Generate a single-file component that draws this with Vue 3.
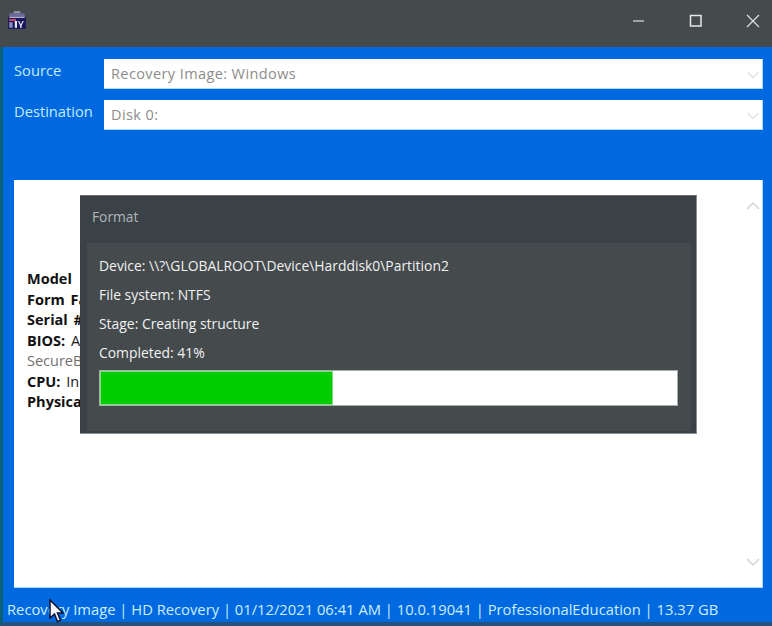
<template>
  <div class="window">
    <header class="titlebar">
      <svg class="app-icon" width="22" height="22" viewBox="0 0 20 20">
        <rect x="7" y="2" width="6" height="2" fill="#9a9cb0" />
        <rect x="3" y="4" width="14" height="3" fill="#6a6c9c" />
        <rect x="2" y="7" width="16" height="11" fill="#17175e" />
        <rect x="3" y="7" width="14" height="1" fill="#d8d8e8" />
        <rect x="3" y="9" width="6" height="2" fill="#c8485c" />
        <rect x="3" y="12" width="3" height="5" fill="#8a90c0" />
        <path d="M8 11h2v6H8zM12 11l1.500 3 1.500-3h1.200l-2 4v2h-1.400v-2l-2-4z" fill="#e8e8f0" />
      </svg>
      <div class="controls">
        <svg width="14" height="14" viewBox="0 0 14 14"><path d="M1 7h11" stroke="#b9bdbd" stroke-width="1.600" /></svg>
        <svg width="14" height="14" viewBox="0 0 14 14"><rect x="1.500" y="1.500" width="10.500" height="10.500" fill="none" stroke="#e6e8e8" stroke-width="1.500" /></svg>
        <svg width="14" height="14" viewBox="0 0 14 14"><path d="M1 1l12 12M13 1L1 13" stroke="#dfe2e2" stroke-width="1.200" /></svg>
      </div>
    </header>

    <main class="body">
      <div class="field">
        <label>Source</label>
        <div class="combo">
          <span>Recovery Image: Windows</span>
          <svg width="14" height="8" viewBox="0 0 14 8"><path d="M1.500 1l5.500 5.500L12.500 1" fill="none" stroke="#e2e2e2" stroke-width="1.300" /></svg>
        </div>
      </div>
      <div class="field second">
        <label>Destination</label>
        <div class="combo">
          <span>Disk 0:</span>
          <svg width="14" height="8" viewBox="0 0 14 8"><path d="M1.500 1l5.500 5.500L12.500 1" fill="none" stroke="#e2e2e2" stroke-width="1.300" /></svg>
        </div>
      </div>

      <section class="panel">
        <div class="info">
          <div><b>Model</b></div>
          <div><b>Form Fa</b></div>
          <div><b>Serial #</b></div>
          <div><b>BIOS:</b> A</div>
          <div class="muted">SecureB</div>
          <div><b>CPU:</b> In</div>
          <div><b>Physica</b></div>
        </div>
        <div class="scroll">
          <svg width="14" height="8" viewBox="0 0 14 8"><path d="M1 7l6-6 6 6" fill="none" stroke="#d4d4d4" stroke-width="1.500" /></svg>
          <svg width="14" height="8" viewBox="0 0 14 8"><path d="M1 1l6 6 6-6" fill="none" stroke="#d4d4d4" stroke-width="1.500" /></svg>
        </div>
      </section>

      <div class="dialog">
        <div class="dialog-title">Format</div>
        <div class="dialog-body">
          <div class="line">Device: \\?\GLOBALROOT\Device\Harddisk0\Partition2</div>
          <div class="line">File system: NTFS</div>
          <div class="line">Stage: Creating structure</div>
          <div class="line">Completed: {{ percent }}%</div>
          <div class="progress">
            <div class="fill" :style="{ width: percent * 0.985 + '%' }"></div>
          </div>
        </div>
      </div>

      <footer class="status">Recovery Image | HD Recovery | 01/12/2021 06:41 AM | 10.0.19041 | ProfessionalEducation | 13.37 GB</footer>

      <svg class="cursor" width="16" height="25" viewBox="0 0 16 25">
        <path d="M1 1v18l4.500-4 3 7.500 3-1.300-3-7.200H14z" fill="#f4f6fa" stroke="#0a1230" stroke-width="1.500" />
      </svg>
    </main>
  </div>
</template>

<script setup>
const percent = 41
</script>

<style>
html, body { margin: 0; background: #0069e0; }
</style>

<style scoped>
.window {
  width: 772px;
  height: 626px;
  display: flex;
  flex-direction: column;
  overflow: hidden;
  font-family: "Open Sans", "Noto Sans", sans-serif;
}
.titlebar {
  height: 47px;
  flex: none;
  background: #454a4c;
  display: flex;
  align-items: center;
  justify-content: space-between;
  padding: 0 12px 0 6px;
  box-sizing: border-box;
}
.app-icon { margin-bottom: 8px; }
.controls {
  display: flex;
  gap: 43px;
  align-items: center;
  margin-bottom: 6px;
}
.body {
  position: relative;
  flex: 1;
  background: #0069e0;
  border-left: 3px solid #0c5f78;
  border-bottom: 4px solid #23527f;
  padding: 12px 9px 0 11px;
  display: flex;
  flex-direction: column;
  min-height: 0;
}
.field {
  display: flex;
  align-items: center;
  height: 30px;
}
.field.second { margin-top: 11px; }
.field label {
  width: 90px;
  flex: none;
  color: #c4ecff;
  font-size: 14.700px;
  position: relative;
  top: -4px;
}
.combo {
  flex: 1;
  height: 30px;
  box-sizing: border-box;
  background: #fff;
  border-bottom: 1px solid #a8dcf8;
  border-right: 1px solid #a8dcf8;
  display: flex;
  align-items: center;
  justify-content: space-between;
  padding: 0 1px 0 7px;
  color: #8c8c8c;
  font-size: 14.500px;
  letter-spacing: 0.4px;
}
.combo svg { margin-right: 1px; margin-top: 3px; }
.panel {
  margin-top: 50px;
  height: 408px;
  flex: none;
  background: #fff;
  border-bottom: 1px solid #a8dcf8;
  border-right: 1px solid #a8dcf8;
  box-sizing: border-box;
  display: flex;
  justify-content: space-between;
}
.info {
  padding: 89px 0 0 13px;
  color: #1a1a1a;
  font-size: 14.500px;
  line-height: 20.500px;
  word-spacing: 2px;
}
.info b { color: #111; font-weight: 700; }
.muted { color: #6f6f6f; }
.scroll {
  padding: 22px 2px 21px 0;
  display: flex;
  flex-direction: column;
  justify-content: space-between;
}
.dialog {
  position: absolute;
  left: 77px;
  top: 148px;
  width: 617px;
  height: 239px;
  box-sizing: border-box;
  background: #3b4247;
  border-top: 1px solid #6b7072;
  border-right: 1px solid #8a8f91;
  border-bottom: 1px solid #8a8f91;
  padding: 0 5px 2px 7px;
  display: flex;
  flex-direction: column;
}
.dialog-title {
  height: 47px;
  flex: none;
  padding: 0 0 7px 5px;
  box-sizing: border-box;
  display: flex;
  align-items: center;
  color: #b0b6b8;
  font-size: 13.800px;
}
.dialog-body {
  flex: 1;
  background: #454a4c;
  padding: 8px 13px 0 12px;
  color: #f0f2f2;
  font-size: 13.900px;
}
.line {
  height: 29px;
  line-height: 29px;
}
.progress {
  margin-top: 3px;
  height: 36px;
  box-sizing: border-box;
  background: #fff;
  border: 1px solid #a9adae;
}
.fill {
  height: 100%;
  background: #00cc00;
  outline: 1px solid #7fe07f;
  outline-offset: -1px;
}
.status {
  margin: 10px 0 0 -7px;
  color: #cdeeff;
  font-size: 14.750px;
  line-height: 22px;
  white-space: nowrap;
}
.cursor {
  position: absolute;
  left: 46px;
  top: 552px;
}
</style>
